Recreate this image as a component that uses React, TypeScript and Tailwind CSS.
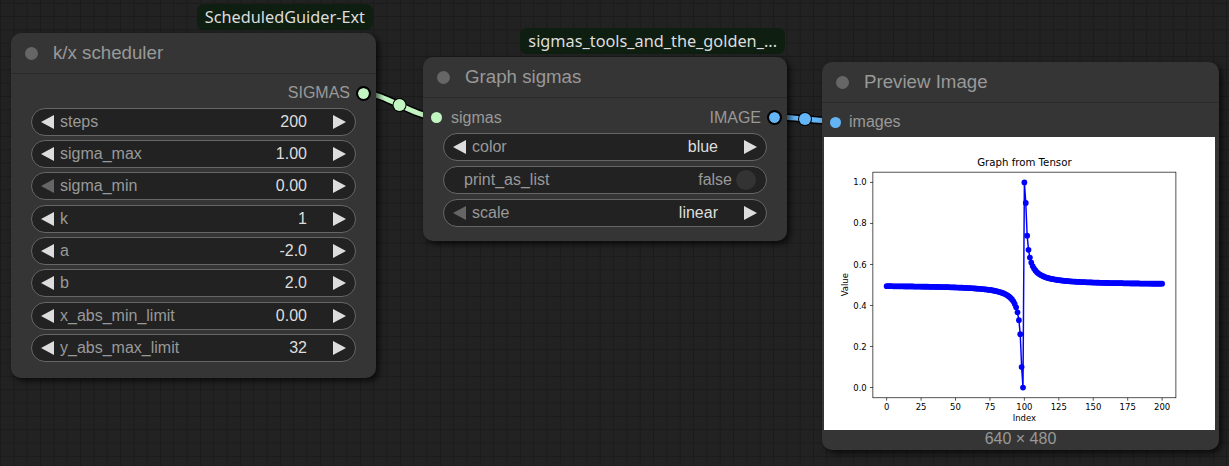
import React from "react";

const font = { fontFamily: '"Liberation Sans", Arial, sans-serif' };

function Arrow({ dir, dim }: { dir: "l" | "r"; dim?: boolean }) {
  return (
    <svg width="13" height="14" viewBox="0 0 13 14" className="shrink-0">
      <path d={dir === "l" ? "M0 7 L13 0 L13 14 Z" : "M13 7 L0 0 L0 14 Z"} fill={dim ? "#666" : "#ddd"} />
    </svg>
  );
}

function NumWidget({ label, value, dimLeft }: { label: string; value: string; dimLeft?: boolean }) {
  return (
    <div className="h-[28px] rounded-full border border-[#666] bg-[#222] flex items-center px-[9px] text-[16px] leading-none">
      <Arrow dir="l" dim={dimLeft} />
      <span className="ml-[6px] text-[#999]">{label}</span>
      <span className="ml-auto text-[#ddd]">{value}</span>
      <span className="ml-[26px] flex">
        <Arrow dir="r" />
      </span>
    </div>
  );
}

function ToggleWidget({ label, value }: { label: string; value: string }) {
  return (
    <div className="h-[28px] rounded-full border border-[#666] bg-[#222] flex items-center pl-[20px] pr-[10px] text-[16px] leading-none">
      <span className="text-[#999]">{label}</span>
      <span className="ml-auto text-[#999]">{value}</span>
      <span className="ml-[4px] w-[20px] h-[20px] rounded-full bg-[#333]" />
    </div>
  );
}

function Title({ text }: { text: string }) {
  return (
    <div className="h-[41px] flex items-center border-b border-[#2a2a2a] pl-[14px]">
      <span className="w-[13px] h-[13px] rounded-full bg-[#666]" />
      <span className="ml-[15px] text-[18.7px] text-[#999]">{text}</span>
    </div>
  );
}

function Badge({ text }: { text: string }) {
  return (
    <div
      className="h-[26px] px-[8px] rounded-[7px] bg-[#0e1e10] text-[#ddd] text-[16.3px] flex items-center leading-none"
      style={{ fontFamily: '"Noto Sans", sans-serif' }}
    >
      {text}
    </div>
  );
}

function Chart() {
  const xs = (i: number) => 80 + ((i + 10) / 220) * 496;
  const ys = (v: number) => 427.2 - ((v + 0.05) / 1.1) * 369.6;
  const pts = Array.from({ length: 201 }, (_, i) => {
    const v = 0.5 + 0.6 / (i - 99.5);
    return [xs(i), ys(Math.max(0, Math.min(1, v)))];
  });
  const d = pts.map((p, k) => (k ? "L" : "M") + p[0].toFixed(1) + " " + p[1].toFixed(1)).join(" ");
  const xt = [0, 25, 50, 75, 100, 125, 150, 175, 200];
  const yt = [0, 0.2, 0.4, 0.6, 0.8, 1.0];
  return (
    <svg width="391" height="293" viewBox="0 0 640 480" preserveAspectRatio="none" className="block" style={{ fontFamily: '"DejaVu Sans", sans-serif' }}>
      <rect width="640" height="480" fill="#fff" />
      <text x="328" y="48" fontSize="16.7" textAnchor="middle" fill="#000">Graph from Tensor</text>
      <path d={d} stroke="#0000ff" strokeWidth="2.4" fill="none" />
      {pts.map((p, k) => (
        <circle key={k} cx={p[0]} cy={p[1]} r="4.7" fill="#0000ff" />
      ))}
      <rect x="80" y="57.6" width="496" height="369.6" fill="none" stroke="#000" strokeWidth="1.1" />
      {xt.map((t) => (
        <g key={t}>
          <line x1={xs(t)} x2={xs(t)} y1="427.2" y2="432" stroke="#000" strokeWidth="1.1" />
          <text x={xs(t)} y="447.5" fontSize="13.9" textAnchor="middle" fill="#000">{t}</text>
        </g>
      ))}
      {yt.map((t) => (
        <g key={t}>
          <line x1="75.2" x2="80" y1={ys(t)} y2={ys(t)} stroke="#000" strokeWidth="1.1" />
          <text x="70" y={ys(t) + 5} fontSize="13.9" textAnchor="end" fill="#000">{t.toFixed(1)}</text>
        </g>
      ))}
      <text x="328" y="465" fontSize="13.9" textAnchor="middle" fill="#000">Index</text>
      <text x="0" y="0" fontSize="13.9" textAnchor="middle" fill="#000" transform="translate(39 242) rotate(-90)">Value</text>
    </svg>
  );
}

function Dot({ color, ring }: { color: string; ring?: boolean }) {
  return (
    <span
      className={"block w-[11px] h-[11px] rounded-full shrink-0 " + (ring ? "outline outline-2 outline-black" : "")}
      style={{ background: color }}
    />
  );
}

export default function App() {
  return (
    <div
      className="relative w-full h-[466px] overflow-hidden bg-[#222] bg-[linear-gradient(to_right,#1b1b1b_1px,transparent_1px),linear-gradient(to_bottom,#1b1b1b_1px,transparent_1px)] bg-[size:13.33px_13.33px] bg-[position:0_2.7px]"
      style={font}
    >
      {/* links */}
      <svg className="absolute inset-0" width="1229" height="466">
        <path d="M363 93 C385 93, 414 117, 436 117" stroke="#000" strokeWidth="8" fill="none" />
        <path d="M363 93 C385 93, 414 117, 436 117" stroke="#c3f5c3" strokeWidth="5" fill="none" />
        <circle cx="399.5" cy="105" r="7" fill="#000" />
        <circle cx="399.5" cy="105" r="6" fill="#c3f5c3" />
        <path d="M775 117 C795 117, 815 121, 835 121" stroke="#000" strokeWidth="8" fill="none" />
        <path d="M775 117 C795 117, 815 121, 835 121" stroke="#64b5f6" strokeWidth="5" fill="none" />
        <circle cx="805" cy="119" r="7" fill="#000" />
        <circle cx="805" cy="119" r="6" fill="#64b5f6" />
      </svg>

      {/* badges */}
      <div className="absolute right-[856px] top-[4px]">
        <Badge text="ScheduledGuider-Ext" />
      </div>
      <div className="absolute right-[444px] top-[28px]">
        <Badge text="sigmas_tools_and_the_golden_..." />
      </div>

      {/* k/x scheduler */}
      <div className="absolute left-[11px] top-[33px] w-[365px] h-[345px] rounded-[10px] bg-[#353535] shadow-[3px_3px_6px_rgba(0,0,0,0.7)]">
        <Title text="k/x scheduler" />
        <div className="pt-[7px] px-[20px]">
          <div className="h-[24px] flex items-center justify-end -mr-[20px] pr-[7px]">
            <span className="text-[16px] text-[#999]">SIGMAS</span>
            <span className="ml-[8px]">
              <Dot color="#c3f5c3" ring />
            </span>
          </div>
          <div className="mt-[2.5px] flex flex-col gap-[4.4px]">
            <NumWidget label="steps" value="200" />
            <NumWidget label="sigma_max" value="1.00" />
            <NumWidget label="sigma_min" value="0.00" dimLeft />
            <NumWidget label="k" value="1" />
            <NumWidget label="a" value="-2.0" />
            <NumWidget label="b" value="2.0" />
            <NumWidget label="x_abs_min_limit" value="0.00" />
            <NumWidget label="y_abs_max_limit" value="32" />
          </div>
        </div>
      </div>

      {/* Graph sigmas */}
      <div className="absolute left-[423px] top-[57px] w-[364px] h-[184px] rounded-[10px] bg-[#353535] shadow-[3px_3px_6px_rgba(0,0,0,0.7)]">
        <Title text="Graph sigmas" />
        <div className="pt-[7.5px] px-[20px]">
          <div className="h-[24px] flex items-center -mx-[20px] pl-[8px] pr-[7px]">
            <Dot color="#c3f5c3" />
            <span className="ml-[9px] text-[16px] text-[#999]">sigmas</span>
            <span className="ml-auto text-[16px] text-[#999]">IMAGE</span>
            <span className="ml-[8px]">
              <Dot color="#64b5f6" ring />
            </span>
          </div>
          <div className="mt-[3px] flex flex-col gap-[5px]">
            <NumWidget label="color" value="blue" />
            <ToggleWidget label="print_as_list" value="false" />
            <NumWidget label="scale" value="linear" dimLeft />
          </div>
        </div>
      </div>

      {/* Preview Image */}
      <div className="absolute left-[822px] top-[62px] w-[397px] h-[388px] rounded-[10px] bg-[#353535] shadow-[3px_3px_6px_rgba(0,0,0,0.7)]">
        <Title text="Preview Image" />
        <div className="pt-[7px]">
          <div className="h-[24px] flex items-center pl-[8px]">
            <Dot color="#64b5f6" />
            <span className="ml-[8px] text-[16px] text-[#999]">images</span>
          </div>
          <div className="mt-[3px] px-[2px]">
            <Chart />
          </div>
          <div className="text-center text-[16px] text-[#999] leading-[18px]">640 × 480</div>
        </div>
      </div>
    </div>
  );
}
